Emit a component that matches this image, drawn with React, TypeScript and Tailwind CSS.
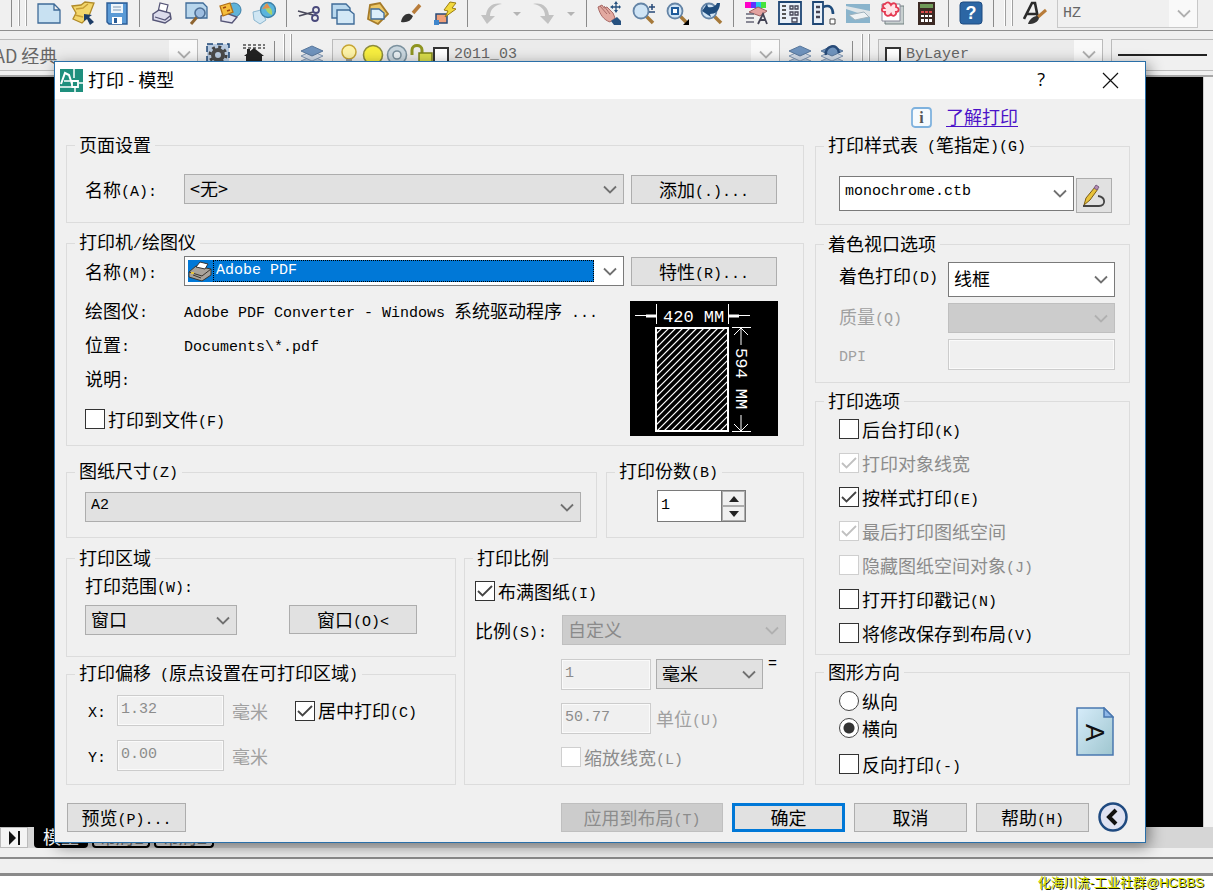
import type { ReactNode } from 'react';
import clsx from 'clsx';

const CJK = 'font-["Noto_Sans_CJK_SC",sans-serif]';
const MONO = 'font-["Liberation_Mono","Noto_Sans_CJK_SC",monospace]';

// Latin runs are half as wide as a Chinese character
function Txt({ children }: { children: string }) {
  const parts = children.split(/([\x20-\x7e]+)/).filter(Boolean);
  return (
    <>
      {parts.map((part, i) =>
        /^[\x20-\x7e]/.test(part) ? (
          <span key={i} className={`${MONO} align-[1px] text-[15px] leading-[12px] whitespace-pre`}>
            {part}
          </span>
        ) : (
          <span key={i}>{part}</span>
        ),
      )}
    </>
  );
}

function Group({ title, className, children }: { title: string; className?: string; children: ReactNode }) {
  return (
    <fieldset className="min-w-0 border border-[#dcdcdc]">
      <legend className="ml-2 px-1 pb-[2px] leading-[16px] whitespace-nowrap">
        <Txt>{title}</Txt>
      </legend>
      <div className={className}>{children}</div>
    </fieldset>
  );
}

interface ComboProps {
  id: string;
  value: string;
  label?: string;
  className?: string;
  tone?: 'gray' | 'white' | 'off' | 'bar';
  mono?: boolean;
}

function Combo({ id, value, label, className, tone = 'gray', mono }: ComboProps) {
  return (
    <div
      className={clsx(
        'grid items-center',
        tone === 'gray' && 'border border-[#adadad] bg-[#e1e1e1]',
        tone === 'white' && 'border border-[#7a7a7a] bg-white',
        tone === 'off' && 'border border-[#bfbfbf] bg-[#cccccc] text-[#8a8a8a]',
        tone === 'bar' && 'text-[#666]',
        className,
      )}
    >
      {tone === 'bar' && <span className="col-start-1 row-start-1 h-full w-7 justify-self-end bg-[#f9f9f9]" />}
      <select
        id={id}
        aria-label={label}
        disabled={tone === 'off'}
        className={clsx(
          'col-start-1 row-start-1 h-full w-full appearance-none bg-transparent pl-[5px] outline-none',
          tone !== 'bar' && 'pb-[3px]',
          mono ? `${MONO} text-[15px]` : 'text-[18px]',
        )}
      >
        <option>{value}</option>
      </select>
      <Chevron faded={tone === 'off' || tone === 'bar'} />
    </div>
  );
}

function Chevron({ faded }: { faded?: boolean }) {
  return (
    <svg
      className={clsx(
        'pointer-events-none col-start-1 row-start-1 mr-[6px] justify-self-end',
        faded ? 'text-[#b0b0b0]' : 'text-[#707070]',
      )}
      width="14"
      height="9"
      viewBox="0 0 14 9"
      fill="none"
      stroke="currentColor"
      strokeWidth="1.8"
    >
      <path d="M1 1.5l6 6 6-6" />
    </svg>
  );
}

function Check({ label, checked, disabled }: { label: string; checked?: boolean; disabled?: boolean }) {
  return (
    <label className={clsx('flex h-5 items-center gap-[3px] leading-[18px] whitespace-nowrap', disabled && 'text-[#8c8c8c]')}>
      <span className="grid h-5 w-5 shrink-0 place-items-center">
        <input
          type="checkbox"
          defaultChecked={checked}
          disabled={disabled}
          className="peer col-start-1 row-start-1 h-5 w-5 appearance-none border border-[#333] bg-white disabled:border-[#cfcfcf]"
        />
        <svg
          className={clsx(
            'pointer-events-none invisible col-start-1 row-start-1 peer-checked:visible',
            disabled ? 'text-[#c0c0c0]' : 'text-[#444]',
          )}
          width="16"
          height="14"
          viewBox="0 0 16 14"
          fill="none"
          stroke="currentColor"
          strokeWidth="1.8"
        >
          <path d="M1 7l4.5 4.5L15 2" />
        </svg>
      </span>
      <span>
        <Txt>{label}</Txt>
      </span>
    </label>
  );
}

function Radio({ label, checked }: { label: string; checked?: boolean }) {
  return (
    <label className="flex h-[27px] items-center gap-[3px] leading-[18px]">
      <input
        type="radio"
        name="orientation"
        defaultChecked={checked}
        className="h-5 w-5 appearance-none rounded-full border border-[#444] bg-white checked:bg-[radial-gradient(circle,#333_5px,#fff_6px)]"
      />
      {label}
    </label>
  );
}

function Btn({ children, className, disabled }: { children: string; className?: string; disabled?: boolean }) {
  return (
    <button
      type="button"
      disabled={disabled}
      className={clsx(
        'h-[29px] shrink-0 leading-[18px] whitespace-nowrap',
        disabled ? 'border border-[#bfbfbf] bg-[#cccccc] text-[#8c8c8c]' : 'bg-[#e1e1e1]',
        className,
      )}
    >
      <Txt>{children}</Txt>
    </button>
  );
}

function NumBox({ id, value, label, className }: { id: string; value: string; label?: string; className?: string }) {
  return (
    <input
      id={id}
      aria-label={label}
      defaultValue={value}
      disabled
      className={clsx(
        MONO,
        'h-[31px] min-w-0 border border-[#cccccc] bg-[#f0f0f0] pb-[2px] pl-[3px] text-[15px] text-[#8c8c8c] shadow-[inset_0_0_0_1px_#fafafa]',
        className,
      )}
    />
  );
}

/* ---------- toolbar ---------- */

function Tool({ name, children, className }: { name: string; children: ReactNode; className?: string }) {
  return (
    <button type="button" aria-label={name} className={clsx('shrink-0', className)}>
      <svg width="24" height="24" viewBox="0 0 24 24" fill="none">
        {children}
      </svg>
    </button>
  );
}

const Sep = () => <span className="h-[27px] w-px shrink-0 bg-[#8a8a8a]" />;

const Grip = () => (
  <span className="flex shrink-0 gap-[5px] self-stretch">
    <span className="w-[2px] border-r border-[#a0a0a0] bg-white" />
    <span className="w-[2px] border-r border-[#a0a0a0] bg-white" />
  </span>
);

const Page = () => (
  <path d="M1 3h16l6 6v13H1z M17 3v6h6" fill="#c8e1f2" stroke="#3f6b98" strokeWidth="1.3" />
);

const PrinterShape = () => (
  <>
    <path d="M8 11l2-9 8 2-2 8z" fill="#fff" stroke="#555577" strokeWidth="1.2" />
    <path d="M3 13l6-4 11 3 1 6-6 4L3 19z" fill="#dcdcec" stroke="#555577" strokeWidth="1.5" />
    <path d="M5 16l10 3 5-4" stroke="#555577" strokeWidth="1.3" />
  </>
);

const Lens = ({ children }: { children?: ReactNode }) => (
  <>
    <path d="M15 15l7 7" stroke="#a6793a" strokeWidth="3.5" />
    <circle cx="10" cy="10" r="7.5" fill="#cfe4f5" stroke="#6484a6" strokeWidth="1.8" />
    {children}
  </>
);

const Layers = () => (
  <>
    <path d="M1 18l11-5 11 5-11 5z" fill="#b9c6d8" stroke="#8198b4" />
    <path d="M1 13l11-5 11 5-11 5z" fill="#d3dce8" stroke="#8198b4" />
    <path d="M1 8l11-5 11 5-11 5z" fill="#6f93bd" stroke="#58779c" />
  </>
);

const Caret = () => <path d="M35 11h8l-4 4z" fill="#b4b4b4" />;

function StandardBar() {
  return (
    <div className="flex h-[31px] shrink-0 items-center gap-[10px] overflow-hidden border-b border-[#8f8f8f] bg-[#f0f0f0] pb-1 pl-[11px]">
      <Sep />
      <span className="-ml-1 self-stretch">
        <span className="flex h-full">
          <Grip />
        </span>
      </span>
      <Tool name="新建"><Page /></Tool>
      <Tool name="打开">
        <path d="M1 5l9-1 4-3 9 1-5 13-7 7-9-4 3-6z" fill="#f3d66b" stroke="#b08a28" strokeWidth="1.3" />
        <path d="M5 8l7-1 5-4M4 14l8 2" stroke="#c79d34" strokeWidth="1.4" />
        <path d="M13 13l8 1-3 2 5 5-4 3-3-6-3 2z" fill="#1c3c66" />
      </Tool>
      <Tool name="保存">
        <path d="M2 2h20v21H4l-2-2z" fill="#5a9ad6" stroke="#2b5c96" strokeWidth="1.4" />
        <path d="M6 3h12v9H6z" fill="#eef5fb" />
        <path d="M8 6h8M8 9h8" stroke="#7c98b4" />
        <path d="M7 16h10v7H7z" fill="#fff" />
        <path d="M9 17h3v5H9z" fill="#2b5c96" />
      </Tool>
      <Sep />
      <Tool name="打印"><PrinterShape /></Tool>
      <Tool name="预览">
        <path d="M2 2h17l4 4v11H2z" fill="#b8d6ec" stroke="#3f6b98" strokeWidth="1.3" />
        <path d="M13 16l-6 7" stroke="#8e6430" strokeWidth="3" />
        <circle cx="16" cy="12" r="5" fill="#9dbde0" stroke="#4e6f96" strokeWidth="1.6" />
      </Tool>
      <Tool name="发布">
        <circle cx="16" cy="9" r="7" fill="#5fb3d9" stroke="#3d7ea6" />
        <path d="M3 15l5-3 11 4-5 6-11-2z" fill="#e6e6f2" stroke="#555577" strokeWidth="1.4" />
        <path d="M2 5l10-3 3 9-10 4z" fill="#f5bd3c" stroke="#b36f15" strokeWidth="1.3" />
        <path d="M5 7l3-1M9 10l3-1" stroke="#a34a10" strokeWidth="1.6" />
      </Tool>
      <Tool name="三维">
        <path d="M1 11l8-2 5 10-6 4-6-4z" fill="#cfe6f3" stroke="#8cb6cf" />
        <circle cx="16" cy="9" r="7.5" fill="#5ab4dc" stroke="#3b7fa6" strokeWidth="1.3" />
        <path d="M13 3c5 2 8 6 7 11-3-1-8-5-7-11z" fill="#a7d36b" />
        <path d="M10 8l5-6 3 5z" fill="#e2904f" />
      </Tool>
      <Sep />
      <Tool name="剪切">
        <path d="M1 10l15 4M2 15l14-4" stroke="#4a4a5c" strokeWidth="1.8" />
        <circle cx="19" cy="9" r="3" stroke="#4a4a7c" strokeWidth="1.8" />
        <circle cx="18" cy="17" r="3" stroke="#4a4a7c" strokeWidth="1.8" />
      </Tool>
      <Tool name="复制">
        <path d="M1 3h14l4 4v10H1z" fill="#b9d8ee" stroke="#3f6b98" strokeWidth="1.4" />
        <path d="M6 9h12l5 4v10H6z" fill="#d3e8f6" stroke="#3f6b98" strokeWidth="1.4" />
      </Tool>
      <Tool name="粘贴">
        <path d="M5 4l10-2 8 11-10 10-10-5z" fill="#ecc765" stroke="#a57b2a" strokeWidth="1.8" />
        <path d="M6 8h8l5 4v6H6z" fill="#dbeefa" stroke="#3f6b98" strokeWidth="1.3" />
      </Tool>
      <Tool name="特性匹配">
        <path d="M14 12l7-8" stroke="#b87c3a" strokeWidth="3.5" />
        <path d="M2 21c1-6 5-9 9-8l3 2c-2 5-6 7-12 6z" fill="#333" />
      </Tool>
      <Tool name="块编辑器">
        <path d="M3 13h11v9H3z" fill="#f0a07a" stroke="#274a78" strokeWidth="1.5" />
        <path d="M1 19h5v5H1z" fill="#3f86cc" />
        <path d="M17 1l6 1-4 5 4 1-11 8 3-6-4-1z" fill="#f2d93c" stroke="#9b7d12" />
      </Tool>
      <Sep />
      <button type="button" aria-label="放弃" className="shrink-0">
        <svg width="44" height="24" viewBox="0 0 44 24">
          <path d="M24 3C15 1 9 6 8 14H3l6 9 8-8h-5c0-6 4-11 12-12z" fill="#c2c2c2" />
          <Caret />
        </svg>
      </button>
      <button type="button" aria-label="重做" className="shrink-0">
        <svg width="44" height="24" viewBox="0 0 44 24">
          <path d="M1 3c9-2 15 3 16 11h5l-6 9-8-8h5C13 9 9 4 1 3z" fill="#c2c2c2" />
          <Caret />
        </svg>
      </button>
      <Sep />
      <Tool name="实时平移">
        <path d="M1 6l4-2 2 3 3-1 6 6 2 5-5 4c-6-2-10-7-12-15z" fill="#e2a9a0" stroke="#a96a66" />
        <path d="M3 5l7 8M7 5l6 8" stroke="#a96a66" />
        <path d="M14 20l6-4 4 4v4h-7z" fill="#27517f" />
        <path d="M19 2v8M15 6h8" stroke="#27517f" strokeWidth="1.3" />
        <path d="M17 3l2-3 2 3zM17 9l2 3 2-3zM16 4l-3 2 3 2zM22 4l2 2-2 2z" fill="#27517f" />
      </Tool>
      <Tool name="实时缩放">
        <Lens />
        <path d="M18 6h6M21 3v6M18 11h6" stroke="#274a78" strokeWidth="1.5" />
      </Tool>
      <Tool name="窗口缩放">
        <Lens><path d="M7 7h6v6H7z" fill="#fff" stroke="#1e5a9a" strokeWidth="2" /></Lens>
        <path d="M24 18v6h-6z" fill="#000" />
      </Tool>
      <Tool name="缩放上一个">
        <Lens><path d="M3 10l5-7 1 3c4 1 8-1 9-4h3c0 8-5 11-10 11l1 3z" fill="#1f4c7c" /></Lens>
      </Tool>
      <Sep />
      <Tool name="特性">
        <path d="M1 1h6v6H1z" fill="#ff00c8" />
        <path d="M7 1h5v6H7z" fill="#5a35ff" />
        <path d="M12 1h5v6h-5z" fill="#23c4e8" />
        <path d="M17 1h5v6h-5z" fill="#46e23c" />
        <path d="M5 11l9-5 9 4-7 5z" fill="#e3a2a0" stroke="#9d5f60" />
        <path d="M2 13h8M2 17h8M2 21h8" stroke="#667" strokeWidth="1.6" />
        <path d="M14 23l5-10 4 10M16 19h6" stroke="#445" strokeWidth="1.8" />
      </Tool>
      <Tool name="设计中心">
        <path d="M1 1h22v22H1z" fill="#e9f0f8" stroke="#1e4674" strokeWidth="1.8" />
        <path d="M4 5h4M4 9h4M4 13h4M4 17h4" stroke="#555" strokeWidth="1.8" />
        <path d="M12 5h3v3h-3zM17 5h3v3h-3zM12 11h3v3h-3zM17 11h3v3h-3zM14 17h5v4h-5z" stroke="#445" strokeWidth="1.3" />
      </Tool>
      <Tool name="工具选项板">
        <path d="M1 1h10v22H1z" fill="#e9f0f8" stroke="#1e4674" strokeWidth="1.8" />
        <path d="M4 6h4M4 11h4M4 16h4" stroke="#445" strokeWidth="2.4" />
        <path d="M11 6c7-3 10 1 10 7" stroke="#1f4c7c" strokeWidth="2.6" />
        <path d="M18 18h5v5h-5z" fill="#fff" stroke="#444" />
      </Tool>
      <Tool name="图纸集">
        <path d="M0 3h24v19H0z" fill="#8ab4cc" />
        <path d="M0 5l24 5v6L0 8z" fill="#dfe5e8" />
        <path d="M3 14l15-3 5 5-14 3z" fill="#eef2f4" stroke="#9fb2bd" />
      </Tool>
      <Tool name="标记集">
        <path d="M5 5h19v18H5z" fill="#c8d0d0" stroke="#708080" />
        <path d="M2 3h18v17H2z" fill="#fff" stroke="#889" />
        <path d="M5 3c3-3 5-1 6 1 2-3 6-2 5 2 4 1 3 5 0 5 1 4-4 5-5 2-2 3-7 2-6-2-4 0-4-4-1-4-2-2-1-4 1-4z" fill="#ffe3e6" stroke="#e53a52" strokeWidth="1.8" />
      </Tool>
      <Tool name="快速计算器">
        <path d="M4 1h17v23H4z" fill="#3c2a24" />
        <path d="M6 3h13v4H6z" fill="#6f9a58" />
        <path d="M7 10h3v2H7zM11 10h3v2h-3zM15 10h3v2h-3z" fill="#d94b4b" />
        <path d="M7 14h3v2H7zM11 14h3v2h-3zM15 14h3v2h-3zM7 18h3v3H7zM11 18h3v3h-3zM15 18h3v3h-3z" fill="#fff" />
      </Tool>
      <Sep />
      <Tool name="帮助">
        <rect x="1" y="1" width="22" height="22" rx="3" fill="#2c66a4" stroke="#1c4a80" />
        <text x="12" y="18" textAnchor="middle" fontSize="18" fontWeight="700" fill="#fff" fontFamily="Liberation Sans">?</text>
      </Tool>
      <Sep />
      <Grip />
      <Tool name="文字样式">
        <path d="M1 18L9 2h3l3 15M4 13h10" stroke="#2a2a2a" strokeWidth="2.6" />
        <path d="M15 16l8-7" stroke="#b87c3a" strokeWidth="3" />
        <path d="M5 23c1-4 5-8 9-8l2 2c-1 4-5 6-11 6z" fill="#333" />
      </Tool>
      <div className="flex min-w-0 flex-1 self-stretch pr-[15px]">
        <Combo id="text-style" label="文字样式" value="HZ" mono tone="bar" className="h-[28px] min-w-0 flex-1 border border-t-0 border-[#c8c8c8]" />
      </div>
    </div>
  );
}

function LayerBar() {
  return (
    <div className="flex h-[46px] shrink-0 items-center gap-2 overflow-hidden border-b-2 border-[#a8a8a8] bg-[#f0f0f0] pt-[3px]">
      <Combo id="workspace" label="工作空间" value="AD 经典" tone="bar" className="-ml-3 h-[32px] w-[210px] shrink-0 border border-[#bbb] bg-[#ececec]" />
      <Tool name="工作空间设置">
        <path d="M1 1h22v22H1z" fill="#b9cbe0" stroke="#1e4674" strokeWidth="1.5" strokeDasharray="6 4" />
        <circle cx="12" cy="12" r="8" stroke="#444" strokeWidth="3" strokeDasharray="3 3.28" />
        <circle cx="12" cy="12" r="5" stroke="#4a4a4a" strokeWidth="4" />
      </Tool>
      <Tool name="我的工作空间" className="ml-1">
        <path d="M1 2h22M1 5h22" stroke="#777" strokeWidth="2" strokeDasharray="3 2" />
        <path d="M12 5l10 8h-2v11H4V13H2zM5 6h3v6H5z" fill="#222" />
      </Tool>
      <Sep />
      <Grip />
      <Tool name="图层特性"><Layers /></Tool>
      <div className="flex h-[32px] min-w-0 flex-1 items-center border border-[#bbb] bg-[#ebebeb] pl-1">
        <Tool name="开关图层">
          <circle cx="12" cy="9" r="7" fill="#fdf3a8" stroke="#c6a533" strokeWidth="1.5" />
          <path d="M9 16h6v6H9z" fill="#9a9a9a" />
        </Tool>
        <Tool name="冻结图层"><circle cx="12" cy="12" r="9.5" fill="#f7ee3f" stroke="#8c8b3c" strokeWidth="1.6" /></Tool>
        <Tool name="视口冻结">
          <circle cx="12" cy="12" r="9.5" fill="#c9d6de" stroke="#7b919e" strokeWidth="1.6" />
          <circle cx="12" cy="12" r="4" fill="#e8eff3" stroke="#7b919e" strokeWidth="1.6" />
        </Tool>
        <Tool name="锁定图层">
          <path d="M3 12V7c0-6 10-6 10 0v5" stroke="#8e9420" strokeWidth="3" />
          <path d="M10 10h13v12H10z" fill="#d9dc4a" stroke="#7d8218" strokeWidth="1.5" />
        </Tool>
        <span className="h-4 w-4 shrink-0 border-2 border-[#333] bg-white" />
        <Combo id="layer" label="图层" value="2011_03" mono tone="bar" className="h-full min-w-0 flex-1" />
      </div>
      <Tool name="图层置为当前">
        <Layers />
        <path d="M3 20l10 3 9-4" stroke="#c9c52c" strokeWidth="3" />
      </Tool>
      <Tool name="上一个图层">
        <Layers />
        <path d="M6 12C4 3 18-1 19 10" stroke="#274a78" strokeWidth="2.5" />
      </Tool>
      <Sep />
      <Grip />
      <div className="flex h-[32px] w-[225px] shrink-0 items-center border border-[#bbb] bg-[#ebebeb] pl-[6px]">
        <span className="h-4 w-4 shrink-0 border-2 border-[#333] bg-white" />
        <Combo id="color" label="颜色" value="ByLayer" mono tone="bar" className="h-full min-w-0 flex-1" />
      </div>
      <div className="flex h-[32px] w-[102px] shrink-0 items-center border border-r-0 border-[#bbb] bg-[#f0f0f0] px-[6px]">
        <span className="h-[2px] flex-1 bg-[#222]" />
      </div>
    </div>
  );
}

function StatusArea() {
  return (
    <>
      <div className="flex h-[32px] shrink-0 items-start border-b-2 border-[#8a8a8a] bg-[#efefef]">
        <button type="button" aria-label="最后一个布局" className="flex h-[21px] w-7 shrink-0 items-center justify-center border border-[#bbb] bg-[#f4f4f4]">
          <svg width="14" height="14" viewBox="0 0 14 14">
            <path d="M2 0l7 7-7 7z" fill="#111" />
            <path d="M12 0v14" stroke="#111" strokeWidth="2" />
          </svg>
        </button>
        <div className="flex h-[21px] flex-1 gap-1 bg-[#d6d6d6] pl-[6px] leading-[18px]">
          <button type="button" className="flex w-[54px] justify-center rounded-b bg-black text-white">模型</button>
          <button type="button" className="flex w-[58px] justify-center rounded-b border-2 border-t-0 border-black bg-[#ececec] text-[#777]">布局1</button>
          <button type="button" className="flex w-[60px] justify-center rounded-b border-2 border-t-0 border-black bg-[#ececec] text-[#777]">布局2</button>
        </div>
      </div>
      <div className="h-[17px] shrink-0 border-b-[3px] border-[#8a8a8a] bg-[#f0f0f0]" />
      <div className="flex h-[20px] shrink-0 justify-end bg-white pr-[9px]">
        <p className="font-['Liberation_Sans','Noto_Sans_CJK_SC',sans-serif] text-[13px] leading-[14px] text-[#d4e000] [text-shadow:1px_1px_0_#1a1a00]">
          化海川流-工业社群@HCBBS
        </p>
      </div>
    </>
  );
}

/* ---------- print dialog ---------- */

function PaperPreview() {
  const hatch = Array.from({ length: 26 }, (_, i) => 7 + i * 7);
  return (
    <svg className="shrink-0 bg-black" width="148" height="135" viewBox="0 0 148 135" fill="none" stroke="#fff">
      <clipPath id="sheet">
        <path d="M26 28h73v101H26z" />
      </clipPath>
      <g clipPath="url(#sheet)" strokeWidth="1.2">
        {hatch.map((d) => (
          <path key={d} d={`M26 ${26 + d}L${26 + d} 26`} />
        ))}
      </g>
      <path d="M26 27h72v103H26z" strokeWidth="2" />
      <path d="M26.5 3v20M98.5 3v20M5 14.5h21M99 14.5h21" />
      <path d="M16 15l10 0M99 15h10" strokeWidth="3" />
      <path d="M102 26.5h19M102 130.5h19M111 27v17M111 114v16" />
      <path d="M104 34l7-7 7 7M104 123l7 7 7-7" />
      <g fill="#fff" stroke="none" fontFamily="Liberation Mono" fontSize="17">
        <text x="33" y="21">420 MM</text>
        <text transform="translate(106 47) rotate(90)">594 MM</text>
      </g>
    </svg>
  );
}

function SettingsColumn() {
  return (
    <div className="min-w-0">
      <Group title="页面设置" className="flex items-center gap-[7px] pt-5 pr-[26px] pb-[18px] pl-[18px]">
        <label htmlFor="setup" className="-mr-[7px] w-[99px] shrink-0">
          <Txt>名称(A):</Txt>
        </label>
        <Combo id="setup" value="<无>" className="h-[30px] min-w-0 flex-1" />
        <Btn className="w-[146px] border border-[#adadad]">添加(.)...</Btn>
      </Group>

      <div className="mt-[10px]">
        <Group title="打印机/绘图仪" className="pt-[3px] pr-[26px] pb-[9px] pl-[18px]">
          <div className="flex items-center gap-[7px]">
            <label htmlFor="printer" className="-mr-[7px] w-[99px] shrink-0">
              <Txt>名称(M):</Txt>
            </label>
            <div className="grid h-[30px] min-w-0 flex-1 items-center border border-[#7a7a7a] bg-white">
              <div className="col-start-1 row-start-1 mr-[29px] ml-[3px] flex h-[22px] items-center bg-[#0078d7]">
                <svg width="25" height="22" viewBox="0 0 25 22">
                  <path d="M1 12l7-6 15 3v6l-9 6-13-4z" fill="#a9a39b" stroke="#3a3630" />
                  <path d="M8 7l4-5 8 2-3 5z" fill="#fff" stroke="#333" />
                  <path d="M1 12l13 4 9-7M5 15l8 3" stroke="#3a3630" fill="none" />
                  <path d="M3 12h3v2H3z" fill="#e6c23a" />
                </svg>
                <span className="h-full flex-1 border border-dotted border-black" />
              </div>
              <select
                id="printer"
                className={`${MONO} col-start-1 row-start-1 h-full w-full appearance-none bg-transparent pl-[31px] text-[15px] text-white outline-none`}
              >
                <option>Adobe PDF</option>
              </select>
              <Chevron />
            </div>
            <Btn className="w-[146px] border border-[#adadad]">特性(R)...</Btn>
          </div>
          <div className="-mr-px flex justify-between">
            <div className="mt-[7px] flex min-w-0 flex-col">
              <dl className="grid grid-cols-[99px_1fr] auto-rows-[34px] items-center whitespace-nowrap">
                <dt><Txt>绘图仪:</Txt></dt>
                <dd><Txt>Adobe PDF Converter - Windows 系统驱动程序 ...</Txt></dd>
                <dt><Txt>位置:</Txt></dt>
                <dd><Txt>Documents\*.pdf</Txt></dd>
                <dt><Txt>说明:</Txt></dt>
                <dd />
              </dl>
              <div className="mt-[14px]">
                <Check label="打印到文件(F)" />
              </div>
            </div>
            <div className="mt-[15px] shrink-0">
              <PaperPreview />
            </div>
          </div>
        </Group>
      </div>

      <div className="mt-4 grid grid-cols-[minmax(0,1fr)_198px] gap-[9px]">
        <Group title="图纸尺寸(Z)" className="pt-[10px] pr-[15px] pb-[15px] pl-[18px]">
          <Combo id="size" label="图纸尺寸" value="A2" mono className="h-[30px]" />
        </Group>
        <Group title="打印份数(B)" className="flex pt-2 pl-[50px]">
          <input
            aria-label="打印份数"
            defaultValue="1"
            className={`${MONO} h-8 w-16 border border-r-0 border-[#7a7a7a] bg-white pb-[2px] pl-[3px] text-[15px]`}
          />
          <div className="flex h-8 w-[25px] flex-col border border-[#7a7a7a] bg-white">
            <button type="button" aria-label="增加" className="flex flex-1 items-center justify-center border border-[#adadad] bg-[#f0f0f0]">
              <svg width="10" height="6" viewBox="0 0 10 6"><path d="M0 6h10L5 0z" fill="#222" /></svg>
            </button>
            <button type="button" aria-label="减少" className="flex flex-1 items-center justify-center border border-[#adadad] bg-[#f0f0f0]">
              <svg width="10" height="6" viewBox="0 0 10 6"><path d="M0 0h10L5 6z" fill="#222" /></svg>
            </button>
          </div>
        </Group>
      </div>

      <div className="mt-[11px] grid grid-cols-[minmax(0,1fr)_340px] gap-[8px]">
        <div className="flex flex-col gap-[7px]">
          <Group title="打印区域" className="pt-[9px] pr-[38px] pb-[21px] pl-[18px]">
            <label htmlFor="range" className="block leading-[18px]">
              <Txt>打印范围(W):</Txt>
            </label>
            <div className="mt-[10px] flex justify-between">
              <Combo id="range" value="窗口" className="h-[30px] w-[152px]" />
              <Btn className="w-[128px] border border-[#adadad]">{'窗口(O)<'}</Btn>
            </div>
          </Group>
          <Group title="打印偏移 (原点设置在可打印区域)" className="grid grid-cols-[29px_107px_62px_1fr] items-center gap-y-[14px] pt-[11px] pb-[13px] pl-[21px]">
            <label htmlFor="off-x"><Txt>X:</Txt></label>
            <NumBox id="off-x" value="1.32" />
            <span className="pl-2 leading-[18px] text-[#a0a0a0]">毫米</span>
            <div className="pl-[9px]">
              <Check label="居中打印(C)" checked />
            </div>
            <label htmlFor="off-y"><Txt>Y:</Txt></label>
            <NumBox id="off-y" value="0.00" />
            <span className="pl-2 leading-[18px] text-[#a0a0a0]">毫米</span>
          </Group>
        </div>

        <Group title="打印比例" className="flex flex-col gap-[14px] pt-[14px] pr-[17px] pl-[10px]">
          <Check label="布满图纸(I)" checked />
          <div className="flex items-center">
            <label htmlFor="scale" className="w-[87px] shrink-0"><Txt>比例(S):</Txt></label>
            <Combo id="scale" value="自定义" tone="off" className="h-[30px] flex-1" />
          </div>
          <div className="flex h-[30px] gap-[5px] pl-[86px]">
            <NumBox id="paper-units" label="图纸单位" value="1" className="w-[90px]" />
            <Combo id="unit" label="单位" value="毫米" className="h-[30px] w-[107px]" />
            <Txt>=</Txt>
          </div>
          <div className="flex h-[30px] items-center gap-[5px] pl-[86px]">
            <NumBox id="drawing-units" value="50.77" className="w-[90px]" />
            <label htmlFor="drawing-units" className="text-[#a0a0a0]"><Txt>单位(U)</Txt></label>
          </div>
          <div className="pl-[86px]">
            <Check label="缩放线宽(L)" disabled />
          </div>
        </Group>
      </div>
    </div>
  );
}

const plotOptions = [
  { label: '后台打印(K)' },
  { label: '打印对象线宽', checked: true, disabled: true },
  { label: '按样式打印(E)', checked: true },
  { label: '最后打印图纸空间', checked: true, disabled: true },
  { label: '隐藏图纸空间对象(J)', disabled: true },
  { label: '打开打印戳记(N)' },
  { label: '将修改保存到布局(V)' },
];

function OptionsColumn() {
  return (
    <div className="min-w-0">
      <Group title="打印样式表 (笔指定)(G)" className="flex items-start gap-[2px] pt-5 pr-[17px] pb-[11px] pl-[23px]">
        <Combo id="style" label="打印样式表" value="monochrome.ctb" mono tone="white" className="h-[35px] min-w-0 flex-1" />
        <button type="button" aria-label="编辑" className="mt-[2px] flex h-[35px] w-[36px] items-center justify-center border border-[#adadad] bg-[#e1e1e1]">
          <svg width="26" height="26" viewBox="0 0 26 26" fill="none">
            <path d="M2 23h16c7 0 7-9-1-10" stroke="#444" strokeWidth="1.8" />
            <path d="M3 22l2-7 9-11 3 2-8 11z" fill="#e8c23a" stroke="#7a5c14" />
            <path d="M13 5l2-3 3 2-2 3z" fill="#b58ab5" stroke="#7a6080" />
          </svg>
        </button>
      </Group>

      <div className="mt-[10px]">
        <Group title="着色视口选项" className="grid grid-cols-[109px_1fr] gap-y-[6px] pt-[9px] pr-[14px] pb-3 pl-[23px] text-[#a0a0a0]">
          <label htmlFor="shade" className="pt-1 leading-[18px] text-black"><Txt>着色打印(D)</Txt></label>
          <Combo id="shade" value="线框" tone="white" className="h-[35px] text-black" />
          <label htmlFor="quality" className="pt-1 leading-[18px]"><Txt>质量(Q)</Txt></label>
          <Combo id="quality" value="" tone="off" className="h-[30px]" />
          <label htmlFor="dpi" className="self-center"><Txt>DPI</Txt></label>
          <NumBox id="dpi" value="" />
        </Group>
      </div>

      <div className="mt-[9px]">
        <Group title="打印选项" className="pt-[2px] pb-1 pl-[23px]">
          {plotOptions.map((o) => (
            <div key={o.label} className="flex h-[34px] items-center">
              <Check {...o} />
            </div>
          ))}
        </Group>
      </div>

      <div className="mt-2">
        <Group title="图形方向" className="flex justify-between pt-[6px] pr-[15px] pb-[10px] pl-[23px]">
          <div>
            <Radio label="纵向" />
            <Radio label="横向" checked />
            <div className="mt-[13px]">
              <Check label="反向打印(-)" />
            </div>
          </div>
          <svg className="mt-5" width="38" height="49" viewBox="0 0 38 49">
            <defs>
              <linearGradient id="leaf" x1="0" y1="0" x2="1" y2="1">
                <stop offset="0" stopColor="#d6ecfa" />
                <stop offset="1" stopColor="#9fc6cf" />
              </linearGradient>
            </defs>
            <path d="M1 1h27l9 9v38H1z" fill="url(#leaf)" stroke="#4a78b0" strokeWidth="1.5" />
            <path d="M28 1v9h9z" fill="#8fb8e8" stroke="#4a78b0" strokeWidth="1.5" />
            <text transform="translate(10 17) rotate(90)" fontFamily="Liberation Sans" fontSize="26" fill="#111">A</text>
          </svg>
        </Group>
      </div>
    </div>
  );
}

function PrintDialog() {
  return (
    <section
      role="dialog"
      aria-label="打印 - 模型"
      className="absolute top-[61px] right-[67px] left-[54px] border border-[#2a6fa8] bg-[#f0f0f0] shadow-[3px_4px_14px_rgba(0,0,0,0.45)]"
    >
      <header className="flex h-[37px] items-center bg-white pr-[26px] pb-1 pl-[5px]">
        <svg className="mt-1" width="23" height="23" viewBox="0 0 23 23" fill="none">
          <path d="M0 0h23v23H0z" fill="#1f8f7d" />
          <path d="M1 15L5 4l4 2 3 9" stroke="#fff" strokeWidth="2" />
          <path d="M4 12h6M14 0v9M0 18h11M15 19v4M19 14h4" stroke="#fff" strokeWidth="1.5" />
          <path d="M12 12h6v6h-6z" fill="#1f8f7d" stroke="#fff" strokeWidth="1.8" />
        </svg>
        <h1 className="ml-[5px] flex-1 text-[18px] leading-[18px]">打印 - 模型</h1>
        <button type="button" aria-label="帮助" className="mr-[57px] font-['Open_Sans',sans-serif] text-[18px] leading-[18px]">?</button>
        <button type="button" aria-label="关闭" className="pt-1">
          <svg width="17" height="17" viewBox="0 0 17 17" stroke="#111" strokeWidth="1.2">
            <path d="M1 1l15 15M16 1L1 16" />
          </svg>
        </button>
      </header>

      <div className="pr-[15px] pb-[10px] pl-[11px]">
        <div className="flex h-[37px] items-center justify-end gap-[14px] pr-28">
          <svg width="21" height="21" viewBox="0 0 21 21">
            <rect x="1" y="1" width="19" height="19" rx="3" fill="#f6fafd" stroke="#7fb2de" strokeWidth="1.8" />
            <text x="10.5" y="16" textAnchor="middle" fontFamily="Liberation Serif" fontWeight="700" fontSize="16" fill="#555">i</text>
          </svg>
          <a href="#learn" className="pb-1 leading-[18px] text-[#4b12c8] underline underline-offset-2">了解打印</a>
        </div>

        <div className="grid grid-cols-[minmax(0,1fr)_315px] gap-[11px]">
          <SettingsColumn />
          <OptionsColumn />
        </div>

        <footer className="mt-[17px] flex items-center gap-[9px] pr-[2px] pl-px">
          <Btn className="mr-auto w-[119px] border border-[#adadad]">预览(P)...</Btn>
          <Btn disabled className="w-[162px]">应用到布局(T)</Btn>
          <Btn className="w-[113px] border-[3px] border-[#0078d7]">确定</Btn>
          <Btn className="w-[113px] border border-[#adadad]">取消</Btn>
          <Btn className="w-[113px] border border-[#adadad]">帮助(H)</Btn>
          <button type="button" aria-label="收起">
            <svg width="30" height="30" viewBox="0 0 30 30" fill="none">
              <circle cx="15" cy="15" r="13.5" fill="#dfe2f2" stroke="#1f4a80" strokeWidth="2.5" />
              <path d="M18 8l-7 7 7 7" stroke="#111" strokeWidth="4" />
            </svg>
          </button>
        </footer>
      </div>
    </section>
  );
}

export default function App() {
  return (
    <main className={`${CJK} relative flex min-h-screen flex-col overflow-hidden bg-[#f0f0f0] text-[18px] leading-[18px] text-black`}>
      <StandardBar />
      <LayerBar />
      <div className="flex flex-1">
        <div className="flex-1 bg-black" />
        <div className="w-[10px] border-l border-[#ccc] bg-[#f4f4f4]" />
      </div>
      <StatusArea />
      <PrintDialog />
    </main>
  );
}
